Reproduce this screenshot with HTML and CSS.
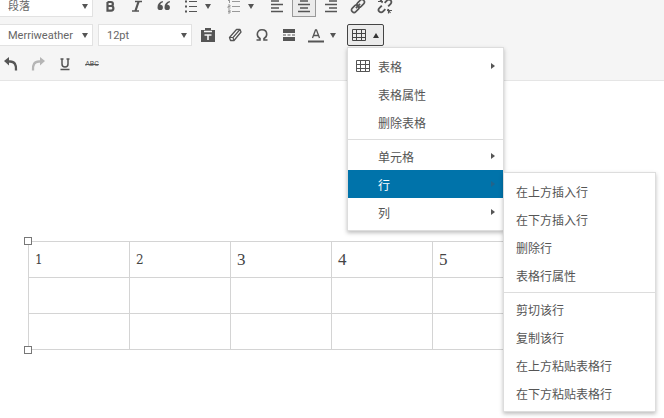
FILE: index.html
```html
<!DOCTYPE html>
<html lang="zh-CN">

<head>
    <meta charset="UTF-8">
    <meta name="viewport" content="width=device-width, initial-scale=1.0">
    <title>编辑器</title>
    <link rel="stylesheet" href="styles.css">
</head>

<body>
    <!-- shared icon shapes -->
    <svg class="sprite" aria-hidden="true">
        <symbol id="icon-table" viewBox="0 0 16 16">
            <path d="M1.5 2.5h13v11h-13z M1.5 6.5h13 M1.5 10.5h13 M5.500 2.500v11 M10.500 2.500v11" fill="none" stroke="currentColor" />
        </symbol>
    </svg>

    <div class="toolbar">
        <div class="toolbar-row">
            <div class="select-box">
                <select class="select" aria-label="格式">
                    <option>段落</option>
                </select>
            </div>
            <button class="btn" type="button" aria-label="粗体">
                <svg class="icon" viewBox="0 0 16 16"><path d="M5.5 4h3.400a2 2 0 0 1 0 4H5.500 M5.500 8h3.600a2.300 2.300 0 0 1 0 4.600H5.500z M5.500 4v8.600" fill="none" stroke="currentColor" stroke-width="2.200" /></svg>
            </button>
            <button class="btn" type="button" aria-label="斜体">
                <svg class="icon" viewBox="0 0 16 16"><path d="M6 3.500h7M3 13h7" stroke="currentColor" stroke-width="1.600" /><path d="M9.600 3.500L6.400 13" stroke="currentColor" stroke-width="2.200" /></svg>
            </button>
            <button class="btn" type="button" aria-label="引用">
                <svg class="icon" viewBox="0 0 16 16"><path d="M6.800 3C3.500 3.600 1.500 6 1.500 9.500a2.700 2.700 0 1 0 2.800-2.800C4.400 5.500 5.400 4.600 7 4.200z M13.800 3C10.500 3.600 8.500 6 8.500 9.500a2.700 2.700 0 1 0 2.800-2.800C11.400 5.500 12.400 4.600 14 4.200z" fill="currentColor" /></svg>
            </button>
            <button class="btn btn-split" type="button" aria-label="项目符号列表">
                <svg class="icon" viewBox="0 0 16 16"><path d="M6 3.500h8M6 8.500h8M6 13.500h8" stroke="currentColor" /><path d="M2 3.500h2M2 8.500h2M2 13.500h2" stroke="currentColor" stroke-width="2" /></svg>
                <span class="caret"></span>
            </button>
            <button class="btn btn-split" type="button" aria-label="编号列表">
                <svg class="icon icon-soft" viewBox="0 0 16 16"><path d="M6 3.500h8M6 8.500h8M6 13.500h8 M3.500 1.500v3.500 M2 2.500h1.500 M2 7h2v1.500h-2v1.500h2.500 M2 12h2v3h-2 M2 13.500h2" fill="none" stroke="currentColor" /></svg>
                <span class="caret"></span>
            </button>
            <button class="btn" type="button" aria-label="左对齐">
                <svg class="icon" viewBox="0 0 16 16"><path d="M2 3h8M2 6.500h12M2 10h8M2 13.500h12" stroke="currentColor" stroke-width="1.600" /></svg>
            </button>
            <button class="btn btn-active" type="button" aria-label="居中" aria-pressed="true">
                <svg class="icon" viewBox="0 0 16 16"><path d="M4 3h8M2 6.500h12M4 10h8M2 13.500h12" stroke="currentColor" stroke-width="1.600" /></svg>
            </button>
            <button class="btn" type="button" aria-label="右对齐">
                <svg class="icon" viewBox="0 0 16 16"><path d="M6 3h8M2 6.500h12M6 10h8M2 13.500h12" stroke="currentColor" stroke-width="1.600" /></svg>
            </button>
            <button class="btn" type="button" aria-label="插入链接">
                <svg class="icon" viewBox="0 0 16 16"><g transform="rotate(-45 8 8)" fill="none" stroke="currentColor" stroke-width="1.600"><rect x="0" y="5.500" width="8.500" height="5" rx="2.500" /><rect x="7.500" y="5.500" width="8.500" height="5" rx="2.500" /><path d="M5 8h6" /></g></svg>
            </button>
            <button class="btn" type="button" aria-label="移除链接">
                <svg class="icon" viewBox="0 0 16 16"><g transform="rotate(-45 8 8)" fill="none" stroke="currentColor" stroke-width="1.800"><path d="M6 5.500H2.500a2.500 2.500 0 0 0 0 5H6 M10 5.500h3.500a2.500 2.500 0 0 1 0 5H10" /></g><path d="M1 3.500h5M2.500 1l3 4M4.500 .5v4M10 12.500h5M10.500 11l3 4M11.500 11v4.500" stroke="currentColor" stroke-width="1.200" /></svg>
            </button>
        </div>

        <div class="toolbar-row">
            <div class="select-box">
                <select class="select" aria-label="字体">
                    <option>Merriweather</option>
                </select>
            </div>
            <div class="select-box size-box">
                <select class="select" aria-label="字号">
                    <option>12pt</option>
                </select>
            </div>
            <button class="btn" type="button" aria-label="粘贴为文本">
                <svg class="icon" viewBox="0 0 16 16"><path d="M1 3h4V1h6v2h4v12H1z" fill="currentColor" /><path d="M4 4.500h8M4.500 8h7M8 8v5" stroke="#f5f5f5" stroke-width="1.600" /></svg>
            </button>
            <button class="btn" type="button" aria-label="清除格式">
                <svg class="icon" viewBox="0 0 16 16"><path d="M9.500 2.500h3.500l1 2.500-7 8.500H3.500L2.500 10.500z" fill="#fff" stroke="currentColor" stroke-width="1.300" stroke-linejoin="round" /><path d="M2.500 10.500h3.500l1 3M6 10.500l7-8" fill="none" stroke="currentColor" stroke-width="1.200" /></svg>
            </button>
            <button class="btn" type="button" aria-label="特殊字符">
                <svg class="icon" viewBox="0 0 16 16"><path d="M2.500 13h3.500v-1.500C4 10.500 3.300 9 3.300 7.200 3.300 4.500 5.200 2.800 8 2.800s4.700 1.700 4.700 4.400c0 1.800-.7 3.300-2.700 4.300V13h3.500" fill="none" stroke="currentColor" stroke-width="1.600" /></svg>
            </button>
            <button class="btn" type="button" aria-label="分页标签">
                <svg class="icon" viewBox="0 0 16 16"><path d="M2 2h12v4H2zM2 10h12v4H2z" fill="currentColor" /><path d="M2 8h3M6.500 8h3M11 8h3" stroke="currentColor" stroke-width="1.200" /></svg>
            </button>
            <button class="btn btn-split" type="button" aria-label="文字颜色">
                <svg class="icon" viewBox="0 0 16 16"><path d="M4.500 11L7.500 3h1L11.500 11M5.500 8.500h5" fill="none" stroke="currentColor" stroke-width="1.300" /><path d="M0 14.500h16" stroke="currentColor" stroke-width="2" /></svg>
                <span class="caret"></span>
            </button>
            <div class="dropdown">
                <button class="btn btn-split btn-open" type="button" aria-label="表格" aria-expanded="true">
                    <svg class="icon"><use href="#icon-table" /></svg>
                    <span class="caret caret-up"></span>
                </button>
                <div class="menu table-menu">
                    <button class="menu-item" type="button">
                        <svg class="icon menu-icon"><use href="#icon-table" /></svg>
                        表格<span class="arrow"></span>
                    </button>
                    <button class="menu-item" type="button">表格属性</button>
                    <button class="menu-item" type="button">删除表格</button>
                    <hr class="separator">
                    <button class="menu-item" type="button">单元格<span class="arrow"></span></button>
                    <div class="submenu-box">
                        <button class="menu-item selected" type="button" aria-expanded="true">行<span class="arrow"></span></button>
                        <div class="menu submenu">
                            <button class="menu-item" type="button">在上方插入行</button>
                            <button class="menu-item" type="button">在下方插入行</button>
                            <button class="menu-item" type="button">删除行</button>
                            <button class="menu-item" type="button">表格行属性</button>
                            <hr class="separator">
                            <button class="menu-item" type="button">剪切该行</button>
                            <button class="menu-item" type="button">复制该行</button>
                            <button class="menu-item" type="button">在上方粘贴表格行</button>
                            <button class="menu-item" type="button">在下方粘贴表格行</button>
                        </div>
                    </div>
                    <button class="menu-item" type="button">列<span class="arrow"></span></button>
                </div>
            </div>
        </div>

        <div class="toolbar-row">
            <button class="btn" type="button" aria-label="撤销">
                <svg class="icon" viewBox="0 0 16 16"><path d="M4 5.500h3c4.500 0 6.500 3 6 9" fill="none" stroke="currentColor" stroke-width="2.300" /><path d="M1 5L6 1v8.500z" fill="currentColor" /></svg>
            </button>
            <button class="btn btn-disabled" type="button" aria-label="重做" disabled>
                <svg class="icon" viewBox="0 0 16 16"><path d="M12 5.500H9c-4.500 0-6.500 3-6 9" fill="none" stroke="currentColor" stroke-width="2.300" /><path d="M15 5L10 1v8.500z" fill="currentColor" /></svg>
            </button>
            <button class="btn" type="button" aria-label="下划线">
                <svg class="icon" viewBox="0 0 16 16"><path d="M5 3v5c0 4 6 4 6 0V3M3.500 3h3M9.500 3h3" fill="none" stroke="currentColor" stroke-width="1.500" /><path d="M3.500 13.500h9" stroke="currentColor" stroke-width="1.500" /></svg>
            </button>
            <button class="btn strike" type="button" aria-label="删除线">ABC</button>
        </div>
    </div>

    <div class="content">
        <div class="table-box">
            <table class="data-table">
                <tr>
                    <td class="small-digit">1</td>
                    <td class="small-digit">2</td>
                    <td>3</td>
                    <td>4</td>
                    <td>5</td>
                </tr>
                <tr><td></td><td></td><td></td><td></td><td></td></tr>
                <tr><td></td><td></td><td></td><td></td><td></td></tr>
            </table>
            <span class="handle handle-tl"></span>
            <span class="handle handle-tr"></span>
            <span class="handle handle-bl"></span>
            <span class="handle handle-br"></span>
        </div>
    </div>
</body>

</html>
```
FILE: styles.css
```css
* {
    box-sizing: border-box;
}

body {
    display: flex;
    flex-direction: column;
    min-height: 100vh;
    margin: 0;
    overflow: hidden;
    background-color: #ffffff;
    color: #555555;
    font-family: Roboto, "Noto Sans CJK SC", sans-serif;
    font-size: 12px;
}

.sprite {
    display: none;
}

/* toolbar */
.toolbar {
    display: flex;
    flex-direction: column;
    gap: 7px;
    margin: -5px 0 0 -1px;
    padding-bottom: 5px;
    background-color: #f5f5f5;
    border-bottom: 1px solid #e5e5e5;
}

.toolbar-row {
    display: flex;
    align-items: center;
    gap: 3px;
    height: 22px;
}

.select-box {
    position: relative;
    width: 94px;
    height: 22px;
    margin-right: 2px;
}

.size-box {
    margin-right: 1px;
}

.select-box::after {
    content: "";
    position: absolute;
    top: 9px;
    right: 5px;
    border: 3px solid transparent;
    border-top: 5px solid #555555;
    border-bottom: 0;
    pointer-events: none;
}

.select {
    appearance: none;
    width: 100%;
    height: 100%;
    padding: 0 8px;
    border: 1px solid #e2e2e2;
    border-radius: 0;
    background-color: #ffffff;
    color: #666666;
    font-family: inherit;
    font-size: 11px;
}

.btn {
    display: flex;
    align-items: center;
    justify-content: center;
    width: 24px;
    height: 22px;
    padding: 0;
    border: 1px solid transparent;
    background: none;
    color: #555555;
    font-family: inherit;
    cursor: pointer;
}

.btn-split {
    justify-content: flex-start;
    gap: 6px;
    width: 40px;
    padding-left: 3px;
}

.btn-active {
    border-color: #999999;
    background-color: #ebebeb;
}

.btn-open {
    width: 37px;
    border-color: #444444;
    border-radius: 2px;
    background-color: #ebebeb;
    color: #444444;
}

.btn-disabled {
    color: #b5b5b5;
}

.strike {
    font-size: 7px;
    text-decoration: line-through;
}

.icon {
    flex: none;
    width: 16px;
    height: 16px;
}

.icon-soft {
    color: #999999;
}

.caret {
    border: 3px solid transparent;
    border-top: 5px solid #555555;
    border-bottom: 0;
}

.caret-up {
    border-top: 0;
    border-bottom: 5px solid #333333;
}

/* menus */
.dropdown,
.submenu-box {
    position: relative;
}

.menu {
    position: absolute;
    z-index: 10;
    padding: 4px 0;
    border: 1px solid #dddddd;
    background-color: #ffffff;
    box-shadow: 0 2px 4px rgba(0, 0, 0, 0.25);
}

.table-menu {
    top: 23px;
    left: 0;
    width: 157px;
}

.submenu {
    top: 2px;
    left: 100%;
    width: 153px;
}

.menu-item {
    display: flex;
    align-items: center;
    width: 100%;
    height: 28px;
    padding: 0 8px 0 30px;
    border: 0;
    background: none;
    color: #555555;
    font-family: inherit;
    font-size: 12px;
    text-align: left;
    cursor: pointer;
}

.submenu .menu-item {
    padding-left: 12px;
}

.menu-icon {
    margin: 0 7px 0 -23px;
}

.menu-item.selected {
    background-color: #0073aa;
    color: #ffffff;
}

.arrow {
    margin-left: auto;
    border: 3px solid transparent;
    border-left: 4px solid #555555;
    border-right: 0;
}

.selected .arrow {
    border-left-color: #23648a;
}

.separator {
    height: 1px;
    margin: 3px 0 2px;
    border: 0;
    background-color: #dddddd;
}

/* editing area */
.content {
    padding: 160px 28px 20px;
}

.table-box {
    position: relative;
    width: max-content;
}

.data-table {
    border-collapse: collapse;
    table-layout: fixed;
    width: 506px;
}

.data-table td {
    height: 36px;
    padding: 0 6px;
    border: 1px solid #d4d4d4;
    color: #444444;
    font-family: "Liberation Serif", serif;
    font-size: 17px;
    line-height: 20px;
}

.data-table .small-digit {
    font-family: "DejaVu Serif", serif;
    font-size: 12px;
}

.handle {
    position: absolute;
    width: 8px;
    height: 8px;
    border: 1px solid #777777;
    background-color: #ffffff;
}

.handle-tl,
.handle-tr {
    top: -4px;
}

.handle-bl,
.handle-br {
    bottom: -4px;
}

.handle-tl,
.handle-bl {
    left: -4px;
}

.handle-tr,
.handle-br {
    right: -4px;
}
```
